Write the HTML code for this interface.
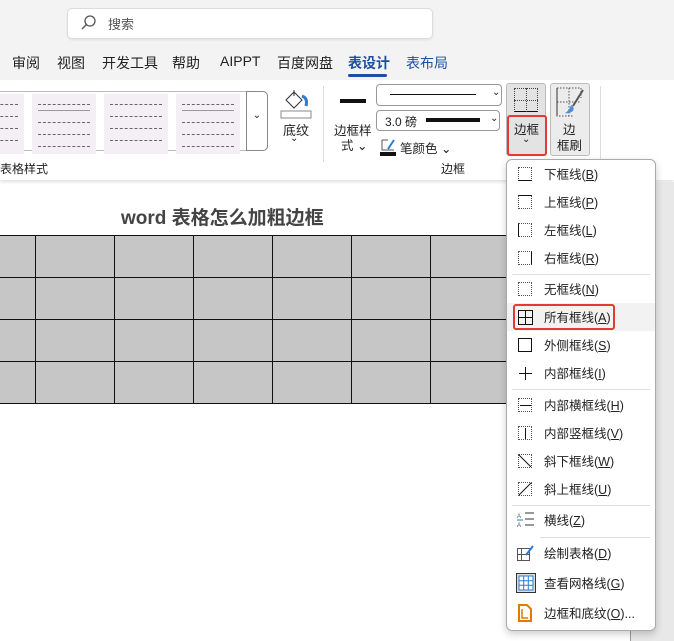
<!DOCTYPE html>
<html><head><meta charset="utf-8"><style>
*{margin:0;padding:0;box-sizing:border-box}
body{width:674px;height:641px;overflow:hidden;position:relative;background:#fff;font-family:"Liberation Sans","Noto Sans CJK SC",sans-serif;color:#222;font-size:13px}
.a{position:absolute;white-space:nowrap}
.top{left:0;top:0;width:674px;height:80px;background:#f3f3f3}
.rib{left:0;top:80px;width:674px;height:100px;background:#fff;box-shadow:0 2px 3px rgba(0,0,0,.12)}
.gray{left:630px;top:182px;width:44px;height:459px;background:#e8e8e8;border-left:1px solid #999}
.tab{top:53px;font-size:14px;color:#222}
table{position:absolute;left:-44px;top:235px;border-collapse:collapse}
td{width:79px;height:42px;border:1.5px solid #111;background:#c6c6c6}
.menu{left:506px;top:159px;width:150px;height:472px;background:#fff;border:1px solid #aaa;border-radius:6px;box-shadow:0 3px 8px rgba(0,0,0,.2)}
.it{left:544px;font-size:12.5px;color:#222;margin-top:-2px}
.ic{left:518px;width:14px;height:14px;border:1px dotted #555}
.sep{height:1px;background:#ddd}
.g{position:absolute;top:94px;width:64px;height:60px;background:#f4eff5}
.g i{position:absolute;left:6px;right:6px;border-top:1.5px dashed #666;height:0}
</style></head><body>
<div class="a top"></div>
<div class="a" style="left:67px;top:8px;width:366px;height:31px;background:#fff;border:1px solid #dcdcdc;border-radius:5px;box-shadow:0 1px 2px rgba(0,0,0,.08)"></div>
<svg class="a" style="left:80px;top:14px" width="18" height="18"><circle cx="10" cy="7" r="5" fill="none" stroke="#555" stroke-width="1.3"/><path d="M6.5 10.5 2 15" stroke="#555" stroke-width="1.4"/></svg>
<div class="a" style="left:108px;top:14px;font-size:13px;color:#555">搜索</div>
<div class="a tab" style="left:12px">审阅</div>
<div class="a tab" style="left:57px">视图</div>
<div class="a tab" style="left:102px">开发工具</div>
<div class="a tab" style="left:172px">帮助</div>
<div class="a tab" style="left:220px">AIPPT</div>
<div class="a tab" style="left:277px">百度网盘</div>
<div class="a tab" style="left:348px;color:#1d4fa0;font-weight:bold">表设计</div>
<div class="a" style="left:348px;top:74px;width:39px;height:3px;background:#1d4fa0;border-radius:2px"></div>
<div class="a tab" style="left:406px;color:#1d4fa0">表布局</div>
<div class="a rib"></div>
<div class="a" style="left:-10px;top:91px;width:278px;height:60px;border:1px solid #bbb;border-radius:5px"></div>
<div class="g" style="left:-40px"><i style="top:10px"></i><i style="top:22px"></i><i style="top:34px"></i><i style="top:46px"></i></div>
<div class="g" style="left:32px"><i style="top:10px"></i><i style="top:16px;border-top:1px solid #999"></i><i style="top:28px"></i><i style="top:40px"></i><i style="top:52px"></i></div>
<div class="g" style="left:104px"><i style="top:10px"></i><i style="top:22px"></i><i style="top:34px"></i><i style="top:46px"></i></div>
<div class="g" style="left:176px"><i style="top:10px"></i><i style="top:16px;border-top:1px solid #999"></i><i style="top:28px"></i><i style="top:40px"></i><i style="top:52px"></i></div>
<div class="a" style="left:246px;top:91px;width:22px;height:60px;border:1px solid #888;border-radius:0 5px 5px 0;background:#fff;text-align:center;padding-top:18px;font-size:10px">⌄</div>
<svg class="a" style="left:280px;top:86px" width="32" height="34"><path d="M6 14 14 6 22 14 14 22Z" fill="#fff" stroke="#333"/><path d="M14 4v6" stroke="#333"/><path d="M22 10q6 2 4 10" stroke="#2b7bd6" stroke-width="3" fill="none"/><rect x="1" y="25" width="30" height="7" fill="#fff" stroke="#888"/></svg>
<div class="a" style="left:283px;top:120px;font-size:13px">底纹</div>
<div class="a" style="left:290px;top:133px;font-size:10px">⌄</div>
<div class="a" style="left:0;top:160px;font-size:12px">表格样式</div>
<div class="a" style="left:323px;top:86px;width:1px;height:76px;background:#ddd"></div>
<div class="a" style="left:340px;top:99px;width:26px;height:4px;background:#111"></div>
<div class="a" style="left:334px;top:120px;font-size:12.5px">边框样</div>
<div class="a" style="left:341px;top:135px;font-size:12.5px">式 ⌄</div>
<div class="a" style="left:376px;top:84px;width:126px;height:22px;border:1px solid #999;border-radius:4px"></div>
<div class="a" style="left:390px;top:94px;width:86px;height:1px;background:#111"></div>
<div class="a" style="left:492px;top:87px;font-size:10px">⌄</div>
<div class="a" style="left:376px;top:110px;width:124px;height:21px;border:1px solid #999;border-radius:4px"></div>
<div class="a" style="left:385px;top:113px;font-size:12px">3.0 磅</div>
<div class="a" style="left:426px;top:118px;width:54px;height:4px;background:#111"></div>
<div class="a" style="left:490px;top:113px;font-size:10px">⌄</div>
<svg class="a" style="left:380px;top:137px" width="18" height="20"><path d="M2 3h6M2 3v10h12" stroke="#555" fill="none"/><path d="M8 12 14 3" stroke="#2b7bd6" stroke-width="2"/><rect x="0" y="15" width="16" height="4" fill="#111"/></svg>
<div class="a" style="left:400px;top:138px;font-size:12.5px">笔颜色 ⌄</div>
<div class="a" style="left:441px;top:160px;font-size:12px">边框</div>
<div class="a" style="left:506px;top:83px;width:40px;height:73px;background:#e3e3e3;border:1px solid #bbb;border-radius:3px"></div>
<div class="a" style="left:514px;top:88px;width:24px;height:24px;border:1px dotted #444;border-bottom:1.5px solid #111"></div>
<div class="a" style="left:526px;top:88px;width:1px;height:24px;border-left:1px dotted #444"></div>
<div class="a" style="left:514px;top:100px;width:24px;height:1px;border-top:1px dotted #444"></div>
<div class="a" style="left:507px;top:115px;width:40px;height:41px;border:2px solid #e53935;border-radius:3px"></div>
<div class="a" style="left:514px;top:119px;font-size:12.5px">边框</div>
<div class="a" style="left:522px;top:134px;font-size:10px">⌄</div>
<div class="a" style="left:550px;top:83px;width:40px;height:73px;background:#ececec;border:1px solid #bbb;border-radius:3px"></div>
<svg class="a" style="left:555px;top:86px" width="32" height="32"><path d="M2 2v28h16M2 2h24v10M2 16h24M14 2v28" stroke="#555" stroke-dasharray="1.5 1.5" fill="none"/><path d="M2 2v28" stroke="#333"/><path d="M28 4 18 20" stroke="#555" stroke-width="2"/><path d="M16 19q4 2 2 6q-4 3-8 2q4-2 6-8z" fill="#4a8fd9"/></svg>
<div class="a" style="left:563px;top:119px;font-size:12.5px">边</div>
<div class="a" style="left:557px;top:135px;font-size:12.5px">框刷</div>
<div class="a" style="left:600px;top:86px;width:1px;height:76px;background:#ddd"></div>
<div class="a gray"></div>
<div class="a" style="left:121px;top:203px;font-size:19px;font-weight:bold;color:#444">word 表格怎么加粗边框</div>
<table><tr><td></td><td></td><td></td><td></td><td></td><td></td><td></td><td></td></tr><tr><td></td><td></td><td></td><td></td><td></td><td></td><td></td><td></td></tr><tr><td></td><td></td><td></td><td></td><td></td><td></td><td></td><td></td></tr><tr><td></td><td></td><td></td><td></td><td></td><td></td><td></td><td></td></tr></table>
<div class="a menu"></div>
<div class="a sep" style="left:512px;top:274px;width:138px"></div>
<div class="a sep" style="left:512px;top:389px;width:138px"></div>
<div class="a sep" style="left:512px;top:505px;width:138px"></div>
<div class="a sep" style="left:540px;top:537px;width:110px"></div>
<div class="a" style="left:507px;top:303px;width:148px;height:28px;background:#f2f2f2"></div>
<div class="a" style="left:513px;top:304px;width:102px;height:26px;border:2px solid #e53935;border-radius:3px"></div>
<div class="a ic" style="top:167px;border-bottom:1.5px solid #111"></div><div class="a it" style="top:166px">下框线(<u>B</u>)</div>
<div class="a ic" style="top:195px;border-top:1.5px solid #111"></div><div class="a it" style="top:194px">上框线(<u>P</u>)</div>
<div class="a ic" style="top:223px;border-left:1.5px solid #111"></div><div class="a it" style="top:222px">左框线(<u>L</u>)</div>
<div class="a ic" style="top:251px;border-right:1.5px solid #111"></div><div class="a it" style="top:250px">右框线(<u>R</u>)</div>
<div class="a ic" style="top:282px"></div><div class="a it" style="top:281px">无框线(<u>N</u>)</div>
<svg class="a" style="left:518px;top:310px" width="15" height="15"><path d="M.5.5h14v14H.5zM7.5 0v15M0 7.5h15" stroke="#111" fill="none"/></svg><div class="a it" style="top:309px">所有框线(<u>A</u>)</div>
<div class="a ic" style="top:338px;border:1.5px solid #111"></div><div class="a it" style="top:337px">外侧框线(<u>S</u>)</div>
<svg class="a" style="left:518px;top:366px" width="15" height="15"><path d="M7.5 1v13M1 7.5h13" stroke="#111"/></svg><div class="a it" style="top:365px">内部框线(<u>I</u>)</div>
<div class="a ic" style="top:398px"></div><div class="a" style="left:520px;top:405px;width:11px;height:1px;background:#111"></div><div class="a it" style="top:397px">内部横框线(<u>H</u>)</div>
<div class="a ic" style="top:426px"></div><div class="a" style="left:525px;top:428px;width:1px;height:11px;background:#111"></div><div class="a it" style="top:425px">内部竖框线(<u>V</u>)</div>
<div class="a ic" style="top:454px"></div><svg class="a" style="left:518px;top:454px" width="14" height="14"><path d="M1 1 13 13" stroke="#111"/></svg><div class="a it" style="top:453px">斜下框线(<u>W</u>)</div>
<div class="a ic" style="top:482px"></div><svg class="a" style="left:518px;top:482px" width="14" height="14"><path d="M1 13 13 1" stroke="#111"/></svg><div class="a it" style="top:481px">斜上框线(<u>U</u>)</div>
<svg class="a" style="left:517px;top:511px" width="18" height="18"><text x="0" y="7" font-size="6" fill="#555">A</text><text x="0" y="16" font-size="6" fill="#555">A</text><path d="M0 9h6" stroke="#2b7bd6"/><path d="M8 2h9M8 8h9M8 14h9" stroke="#333"/></svg><div class="a it" style="top:512px">横线(<u>Z</u>)</div>
<svg class="a" style="left:517px;top:545px" width="18" height="17"><path d="M.5 3.5h12v12H.5zM4.5 3v13M.5 9.5h12" stroke="#555" fill="none"/><path d="M16 1 9 10" stroke="#2b7bd6" stroke-width="2"/></svg><div class="a it" style="top:545px">绘制表格(<u>D</u>)</div>
<svg class="a" style="left:516px;top:573px" width="20" height="20"><rect x=".5" y=".5" width="19" height="19" fill="#ddd" stroke="#333"/><rect x="3" y="3" width="14" height="14" fill="#fff" stroke="#2b7bd6"/><path d="M7.7 3v14M12.3 3v14M3 7.7h14M3 12.3h14" stroke="#2b7bd6"/></svg><div class="a it" style="top:575px">查看网格线(<u>G</u>)</div>
<svg class="a" style="left:518px;top:604px" width="14" height="18"><path d="M1 1h8l4 4v12H1z" fill="#fff" stroke="#e07b00" stroke-width="2"/><path d="M4 5v9h6" stroke="#e07b00" stroke-width="1.5" fill="none"/></svg><div class="a it" style="top:605px">边框和底纹(<u>O</u>)...</div>
</body></html>
